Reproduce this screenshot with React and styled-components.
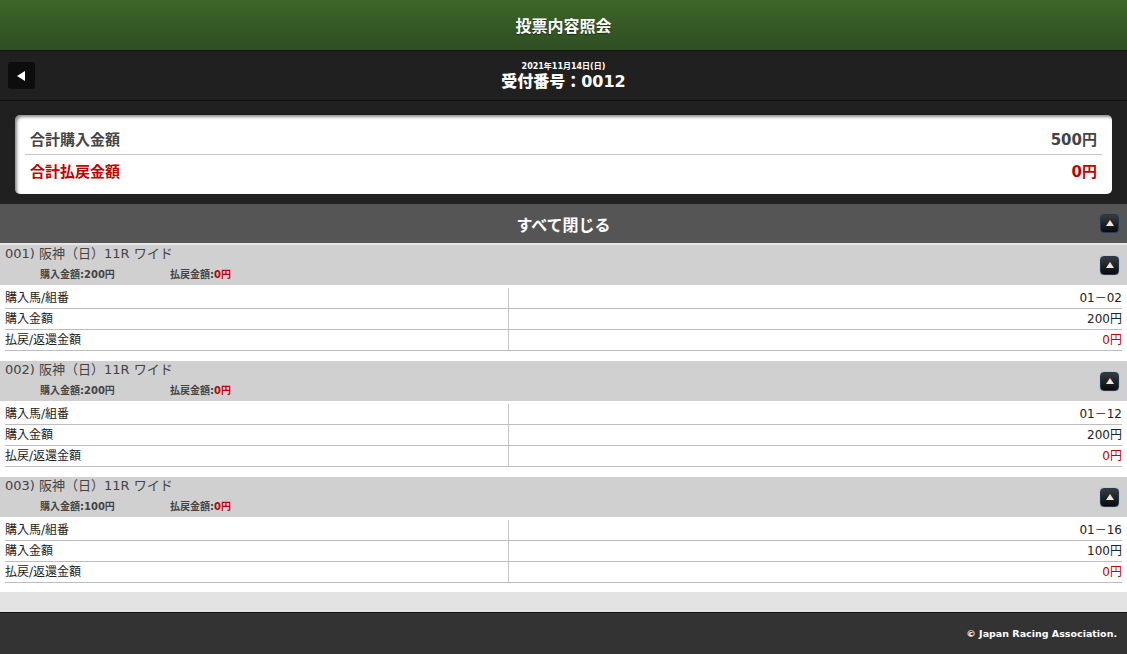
import React from 'react';
import styled, { createGlobalStyle } from 'styled-components';

const tickets = [
  { no: '001', race: '阪神（日）11R ワイド', amount: '200円', payout: '0円', combo: '01－02' },
  { no: '002', race: '阪神（日）11R ワイド', amount: '200円', payout: '0円', combo: '01－12' },
  { no: '003', race: '阪神（日）11R ワイド', amount: '100円', payout: '0円', combo: '01－16' },
];

const GlobalStyle = createGlobalStyle`
  html, body {
    margin: 0;
    padding: 0;
    background: #fff;
  }
  body {
    font-family: "DejaVu Sans", "Noto Sans CJK JP", sans-serif;
    color: #222;
  }
`;

const Page = styled.div`
  display: flex;
  flex-direction: column;
  min-height: 100vh;
`;

const TitleBar = styled.header`
  height: 50px;
  display: flex;
  align-items: center;
  justify-content: center;
  background: linear-gradient(#3d6529, #2f4e22);
  color: #fff;
  font-size: 16px;
  font-weight: bold;
  text-shadow: 0 1px 1px rgba(0, 0, 0, 0.5);
`;

const SubBar = styled.div`
  height: 49px;
  display: grid;
  grid-template-columns: 1fr auto 1fr;
  align-items: center;
  padding: 0 8px;
  background: #202020;
  border-top: 1px solid #141414;
  border-bottom: 1px solid #0e0e0e;
  color: #fff;
`;

const BackButton = styled.button`
  width: 27px;
  height: 27px;
  padding: 0;
  border: none;
  border-radius: 3px;
  background: #0d0d0d;
  display: flex;
  align-items: center;
  justify-content: center;
  justify-self: start;

  &::before {
    content: '';
    border-style: solid;
    border-width: 5px 8px 5px 0;
    border-color: transparent #fff transparent transparent;
    margin-left: -2px;
  }
`;

const Receipt = styled.div`
  display: flex;
  flex-direction: column;
  align-items: center;
  font-weight: bold;
  margin-top: 1px;

  small {
    font-size: 8px;
    line-height: 11px;
  }

  strong {
    font-size: 16px;
    line-height: 19px;
  }
`;

const SummaryArea = styled.section`
  background: #202020;
  padding: 14px 15px 10px;
`;

const SummaryCard = styled.div`
  background: #fff;
  border-radius: 5px;
  padding: 8px 10px;
  box-shadow: inset 2px 2px 3px rgba(0, 0, 0, 0.45);
`;

const SummaryRow = styled.div`
  height: 31px;
  display: flex;
  align-items: center;
  justify-content: space-between;
  padding: 0 5px;
  font-size: 15px;
  font-weight: bold;
  color: ${p => (p.$red ? '#c00000' : '#444')};

  & + & {
    border-top: 1px solid #c4c4c4;
  }
`;

const CloseAllBar = styled.div`
  height: 39px;
  display: grid;
  grid-template-columns: 1fr auto 1fr;
  align-items: center;
  padding: 0 8px;
  background: #555;
  color: #fff;
  font-size: 16px;
  font-weight: bold;
  border-bottom: 2px solid #e6e6e6;

  > button {
    justify-self: end;
  }
`;

const ToggleButton = styled.button`
  width: 19px;
  height: 19px;
  padding: 0;
  border: 1px solid #1d3a57;
  border-radius: 4px;
  background: linear-gradient(#3a3a3a, #0a0a0a);
  box-shadow: 0 0 1px rgba(40, 80, 130, 0.8);
  display: flex;
  align-items: center;
  justify-content: center;

  &::before {
    content: '';
    border-style: solid;
    border-width: 0 4px 6px 4px;
    border-color: transparent transparent #e8e8e8 transparent;
    margin-top: -1px;
  }
`;

const Tickets = styled.main`
  flex: 1;
  background: #fff;
`;

const Ticket = styled.article`
  & + & {
    margin-top: 10px;
  }
`;

const TicketHead = styled.div`
  height: 40px;
  display: flex;
  align-items: center;
  justify-content: space-between;
  padding: 0 8px 0 5px;
  background: #d0d0d0;
  color: #444;
`;

const TicketInfo = styled.div`
  align-self: flex-start;
`;

const TicketTitle = styled.div`
  font-size: 13px;
  line-height: 18px;
`;

const TicketMeta = styled.div`
  display: flex;
  font-size: 10px;
  font-weight: bold;
  line-height: 14px;
  padding-left: 35px;
  margin-top: 5px;

  span {
    width: 130px;
  }
`;

const Red = styled.span`
  color: #c00000;
`;

const Rows = styled.div`
  padding: 3px 5px 0;
`;

const Row = styled.div`
  display: grid;
  grid-template-columns: 45% 55%;
  height: 20px;
  border-bottom: 1px solid #bdbdbd;
  font-size: 12px;
  line-height: 20px;
`;

const Label = styled.div`
  color: #222;
`;

const Value = styled.div`
  border-left: 1px solid #c4c4c4;
  text-align: right;
  color: ${p => (p.$red ? '#c00000' : '#222')};
`;

const Band = styled.div`
  height: 20px;
  margin-top: 9px;
  background: #e3e3e3;
`;

const Footer = styled.footer`
  height: 41px;
  display: flex;
  align-items: center;
  justify-content: flex-end;
  padding: 0 10px;
  background: #333;
  border-top: 1px solid #111;
  color: #fff;
  font-size: 9.5px;
  font-weight: bold;
`;

const App = () => (
  <Page>
    <GlobalStyle />
    <TitleBar>投票内容照会</TitleBar>

    <SubBar>
      <BackButton aria-label="戻る" />
      <Receipt>
        <small>2021年11月14日(日)</small>
        <strong>受付番号：0012</strong>
      </Receipt>
    </SubBar>

    <SummaryArea>
      <SummaryCard>
        <SummaryRow>
          <span>合計購入金額</span>
          <span>500円</span>
        </SummaryRow>
        <SummaryRow $red>
          <span>合計払戻金額</span>
          <span>0円</span>
        </SummaryRow>
      </SummaryCard>
    </SummaryArea>

    <CloseAllBar>
      <span />
      <span>すべて閉じる</span>
      <ToggleButton aria-label="すべて閉じる" />
    </CloseAllBar>

    <Tickets>
      {tickets.map(t => (
        <Ticket key={t.no}>
          <TicketHead>
            <TicketInfo>
              <TicketTitle>{t.no}) {t.race}</TicketTitle>
              <TicketMeta>
                <span>購入金額:{t.amount}</span>
                <span>
                  払戻金額:<Red>{t.payout}</Red>
                </span>
              </TicketMeta>
            </TicketInfo>
            <ToggleButton aria-label="閉じる" />
          </TicketHead>
          <Rows>
            <Row>
              <Label>購入馬/組番</Label>
              <Value>{t.combo}</Value>
            </Row>
            <Row>
              <Label>購入金額</Label>
              <Value>{t.amount}</Value>
            </Row>
            <Row>
              <Label>払戻/返還金額</Label>
              <Value $red>{t.payout}</Value>
            </Row>
          </Rows>
        </Ticket>
      ))}
      <Band />
    </Tickets>

    <Footer>© Japan Racing Association.</Footer>
  </Page>
);

export default App;
